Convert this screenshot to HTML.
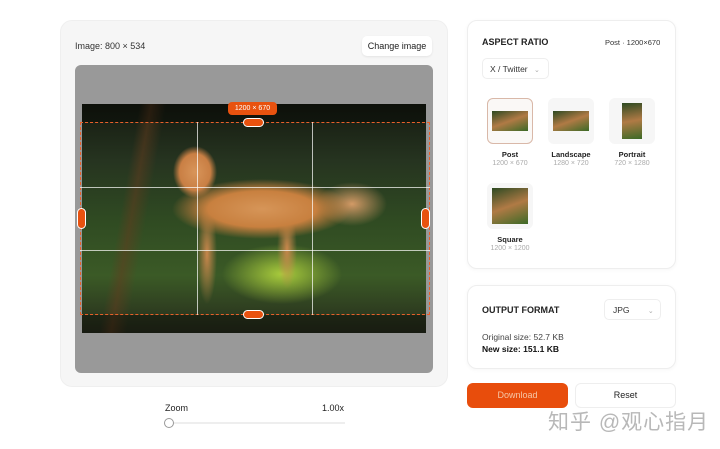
<!DOCTYPE html>
<html><head><meta charset="utf-8"><style>
*{box-sizing:border-box;margin:0;padding:0}
body{width:720px;height:449px;background:#fff;font-family:"Liberation Sans","Noto Sans CJK SC",sans-serif;position:relative;overflow:hidden;color:#222}
.abs{position:absolute}
.card{position:absolute;background:#fff;border:1px solid #eee;border-radius:10px;box-shadow:0 1px 4px rgba(0,0,0,.04)}
</style></head><body>
<div class="abs" style="left:60px;top:20px;width:388px;height:367px;background:#f6f6f6;border-radius:12px;border:1px solid #efefef"></div>
<div class="abs" style="left:75px;top:41px;font-size:9px;color:#333">Image: 800 × 534</div>
<div class="abs" style="left:362px;top:36px;width:70px;height:20px;background:#fff;border-radius:5px;font-size:9px;line-height:20px;text-align:center;color:#222;box-shadow:0 1px 2px rgba(0,0,0,.08)">Change image</div>
<div class="abs" style="left:75px;top:65px;width:358px;height:308px;background:#999;border-radius:6px"></div>
<div class="abs" style="left:82px;top:104px;width:344px;height:229px;background:
radial-gradient(ellipse 22px 26px at 113px 68px,#d8955a 0%,#c97f44 70%,rgba(200,127,68,0) 100%),
radial-gradient(ellipse 90px 30px at 180px 105px,#d69558 0%,#c8803f 60%,rgba(200,128,63,0) 100%),
radial-gradient(ellipse 35px 22px at 270px 100px,#d39a66 0%,rgba(200,140,90,0) 100%),
radial-gradient(ellipse 10px 50px at 125px 150px,#c8874c 0%,rgba(200,135,76,0) 100%),
radial-gradient(ellipse 10px 40px at 205px 145px,#c8874c 0%,rgba(200,135,76,0) 100%),
radial-gradient(ellipse 60px 30px at 200px 170px,#a9cc3c 0%,rgba(120,160,40,0) 100%),
linear-gradient(100deg,rgba(0,0,0,0) 0%,rgba(0,0,0,0) 15%,rgba(100,60,30,.5) 18%,rgba(0,0,0,0) 22%),
linear-gradient(180deg,#151a10 0%,#263420 25%,#2f4a22 50%,#3b5a26 75%,#262b1c 100%)"></div>
<div class="abs" style="left:82px;top:104px;width:344px;height:18px;background:rgba(0,0,0,.35)"></div>
<div class="abs" style="left:82px;top:315px;width:344px;height:18px;background:rgba(0,0,0,.35)"></div>
<div class="abs" style="left:80px;top:122px;width:350px;height:193px;border:1px dashed #e8602a"></div>
<div class="abs" style="left:197px;top:122px;width:1px;height:193px;background:rgba(255,255,255,.7)"></div>
<div class="abs" style="left:312px;top:122px;width:1px;height:193px;background:rgba(255,255,255,.7)"></div>
<div class="abs" style="left:80px;top:187px;width:350px;height:1px;background:rgba(255,255,255,.7)"></div>
<div class="abs" style="left:80px;top:250px;width:350px;height:1px;background:rgba(255,255,255,.7)"></div>
<div class="abs" style="left:228px;top:102px;width:49px;height:13px;background:#e8520f;border-radius:4px;color:#fff;font-size:7px;line-height:13px;text-align:center">1200 × 670</div>
<div class="abs" style="left:243px;top:118px;width:21px;height:9px;background:#e8520f;border-radius:5px;border:1px solid #fff"></div>
<div class="abs" style="left:243px;top:310px;width:21px;height:9px;background:#e8520f;border-radius:5px;border:1px solid #fff"></div>
<div class="abs" style="left:77px;top:208px;width:9px;height:21px;background:#e8520f;border-radius:5px;border:1px solid #fff"></div>
<div class="abs" style="left:421px;top:208px;width:9px;height:21px;background:#e8520f;border-radius:5px;border:1px solid #fff"></div>
<div class="abs" style="left:165px;top:403px;font-size:9px;color:#222">Zoom</div>
<div class="abs" style="left:322px;top:403px;font-size:9px;color:#222">1.00x</div>
<div class="abs" style="left:170px;top:422px;width:175px;height:2px;background:#eee"></div>
<div class="abs" style="left:164px;top:418px;width:10px;height:10px;border:1px solid #999;border-radius:50%;background:#fff"></div>

<div class="card" style="left:467px;top:20px;width:209px;height:249px"></div>
<div class="abs" style="left:482px;top:37px;font-size:9px;font-weight:bold;color:#222">ASPECT RATIO</div>
<div class="abs" style="left:605px;top:38px;font-size:7.5px;color:#333">Post · 1200×670</div>
<div class="abs" style="left:482px;top:58px;width:67px;height:21px;border:1px solid #eee;border-radius:5px;font-size:8.5px;line-height:20px;padding-left:7px;color:#333">X / Twitter <span style="color:#aaa;font-size:7px;margin-left:4px">⌄</span></div>
<div class="abs" style="left:487px;top:98px;width:46px;height:46px;border:1px solid #d9b8a8;border-radius:6px;background:#faf8f6"></div>
<div class="abs" style="left:492px;top:111px;width:36px;height:20px;background:linear-gradient(160deg,#2d4a22,#b07a45 50%,#3c6a26)"></div>
<div class="abs" style="left:548px;top:98px;width:46px;height:46px;border-radius:6px;background:#f6f6f6"></div>
<div class="abs" style="left:553px;top:111px;width:36px;height:20px;background:linear-gradient(160deg,#2d4a22,#b07a45 50%,#3c6a26)"></div>
<div class="abs" style="left:609px;top:98px;width:46px;height:46px;border-radius:6px;background:#f6f6f6"></div>
<div class="abs" style="left:622px;top:103px;width:20px;height:36px;background:linear-gradient(170deg,#2d4a22,#b07a45 50%,#3c6a26)"></div>
<div class="abs" style="left:487px;top:183px;width:46px;height:46px;border-radius:6px;background:#f6f6f6"></div>
<div class="abs" style="left:492px;top:188px;width:36px;height:36px;background:linear-gradient(160deg,#2d4a22,#b07a45 50%,#3c6a26)"></div>
<div class="abs" style="left:480px;top:150px;width:60px;text-align:center;font-size:7.5px;font-weight:bold">Post</div>
<div class="abs" style="left:480px;top:160px;width:60px;text-align:center;font-size:7px;color:#aaa">1200 × 670</div>
<div class="abs" style="left:541px;top:150px;width:60px;text-align:center;font-size:7.5px;font-weight:bold">Landscape</div>
<div class="abs" style="left:541px;top:160px;width:60px;text-align:center;font-size:7px;color:#aaa">1280 × 720</div>
<div class="abs" style="left:602px;top:150px;width:60px;text-align:center;font-size:7.5px;font-weight:bold">Portrait</div>
<div class="abs" style="left:602px;top:160px;width:60px;text-align:center;font-size:7px;color:#aaa">720 × 1280</div>
<div class="abs" style="left:480px;top:235px;width:60px;text-align:center;font-size:7.5px;font-weight:bold">Square</div>
<div class="abs" style="left:480px;top:245px;width:60px;text-align:center;font-size:7px;color:#aaa">1200 × 1200</div>

<div class="card" style="left:467px;top:285px;width:209px;height:84px"></div>
<div class="abs" style="left:482px;top:305px;font-size:9px;font-weight:bold">OUTPUT FORMAT</div>
<div class="abs" style="left:604px;top:299px;width:57px;height:21px;border:1px solid #eee;border-radius:5px;font-size:8.5px;line-height:20px;padding-left:8px;color:#333">JPG <span style="color:#aaa;font-size:7px;margin-left:16px">⌄</span></div>
<div class="abs" style="left:482px;top:332px;font-size:8.5px;color:#444">Original size: 52.7 KB</div>
<div class="abs" style="left:482px;top:344px;font-size:8.5px;font-weight:bold;color:#111">New size: 151.1 KB</div>

<div class="abs" style="left:467px;top:383px;width:101px;height:25px;background:#e84d0c;border-radius:6px;color:#f6c6a6;font-size:9px;line-height:25px;text-align:center">Download</div>
<div class="abs" style="left:575px;top:383px;width:101px;height:25px;background:#fff;border:1px solid #eee;border-radius:6px;font-size:9px;line-height:23px;text-align:center">Reset</div>
<div class="abs" style="left:548px;top:406px;font-size:21px;color:rgba(160,160,160,.75);white-space:nowrap;letter-spacing:1px">知乎 @观心指月</div>
</body></html>
